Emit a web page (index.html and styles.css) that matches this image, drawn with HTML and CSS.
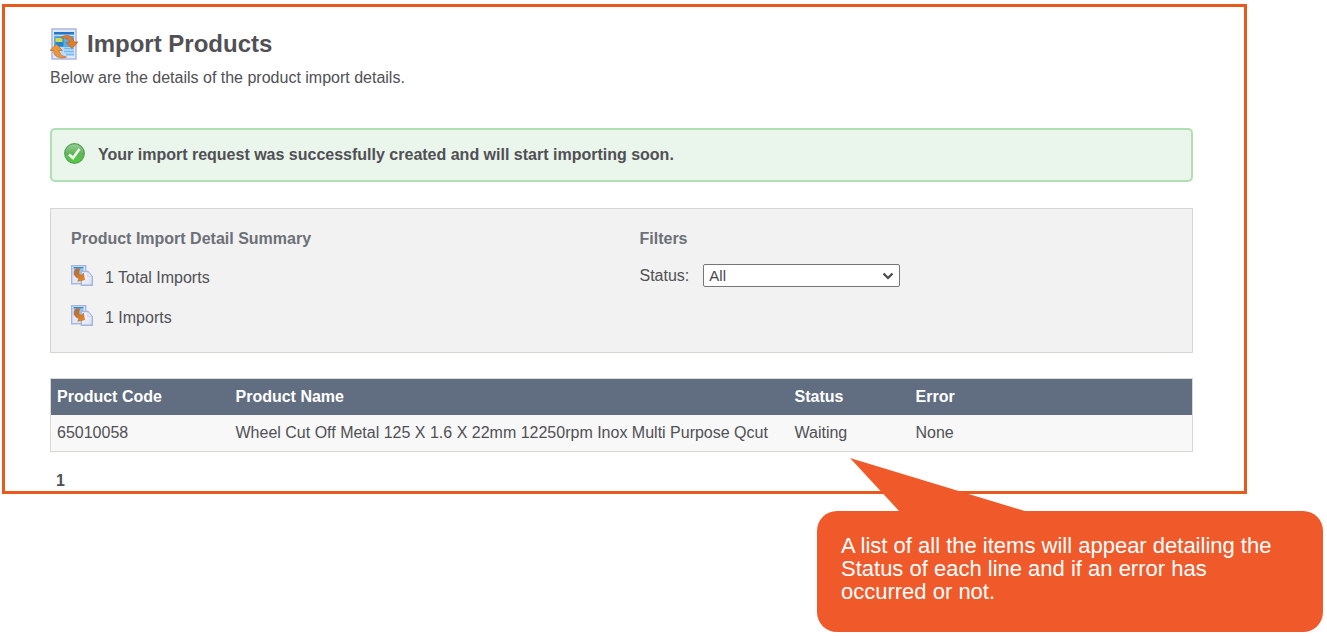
FILE: index.html
```html
<!DOCTYPE html>
<html lang="en">
<head>
    <meta charset="UTF-8">
    <meta name="viewport" content="width=device-width, initial-scale=1.0">
    <title>Import Products</title>
    <link rel="stylesheet" href="styles.css">
</head>
<body>
    <svg class="defs" width="0" height="0" aria-hidden="true">
        <defs>
            <linearGradient id="paper" x1="0" y1="0" x2="1" y2="1">
                <stop offset="0" stop-color="#ffffff"/>
                <stop offset="1" stop-color="#d3dff5"/>
            </linearGradient>
            <linearGradient id="orange" x1="0" y1="0" x2="1" y2="1">
                <stop offset="0" stop-color="#a86a35"/>
                <stop offset="1" stop-color="#f5871f"/>
            </linearGradient>
            <symbol id="icon-copy" viewBox="0 0 22 21">
                <rect x="0.7" y="0.7" width="14" height="18" fill="#e1eafa" stroke="#a9b4d8" stroke-width="1.400"/>
                <path d="M2.500 2.800h10" stroke="#2186d8" stroke-width="1.500"/>
                <path d="M2.500 4h10v6h-10z" fill="#8fc3ee"/>
                <path d="M10.300 6.500h6.500l4.500 5v8.800h-11z" fill="url(#paper)" stroke="#a9b4d8" stroke-width="1.400"/>
                <path d="M17 7l-.5 4.300 4.500.4" fill="#e4ebfa" stroke="#c5cee8" stroke-width=".7"/>
                <path d="M5.500 3.500C1.800 7 2.500 12 8 13.600L6.800 16.300l6.700-1.500L12.500 8l-2.300 2.500C7.500 9.500 7.300 6.500 9 4z" fill="url(#orange)" stroke="#b06a30" stroke-width=".6"/>
            </symbol>
        </defs>
    </svg>

    <main class="frame">
        <header class="page-title">
            <svg class="title-icon" viewBox="0 0 28 32" aria-hidden="true">
                <rect x="2" y="1" width="24" height="30" fill="#dce7fa" stroke="#aeb7dc" stroke-width="1.500"/>
                <path d="M4 4h20v24H4z" fill="#b9dcf8"/>
                <path d="M4 4h20v2.500H4z" fill="#2376cc"/>
                <path d="M4 8h20v11H4z" fill="#58aeea"/>
                <path d="M5.500 9.500h8v9h-8z" fill="#2184ce"/>
                <path d="M5.500 10h7v4h-7z" fill="#d3d94f"/>
                <path d="M14 20.500h10M14 23.500h10M16 26.500h8" stroke="#75bbee" stroke-width="1.500"/>
                <path d="M11 10C13 6.500 22.500 5.500 24 14h4l-6 6.500L16 14.500h3.500C19 11 16 9.500 11 10z" fill="#e07c2e" stroke="#b5642c" stroke-width=".7"/>
                <path d="M16.500 29C10 31.500 3.500 28.500 3.500 22.500H0L6.500 16l5.800 6.500H9c0 3.500 3.500 6 7.500 6.500z" fill="#f0943a" stroke="#b5692c" stroke-width=".7"/>
            </svg>
            <h1>Import Products</h1>
        </header>
        <p class="intro">Below are the details of the product import details.</p>

        <div class="message" role="status">
            <svg class="message-icon" viewBox="0 0 21 21" aria-hidden="true">
                <defs>
                    <linearGradient id="green" x1="0" y1="0" x2="0" y2="1">
                        <stop offset="0" stop-color="#9ccf98"/>
                        <stop offset="0.5" stop-color="#5fb55a"/>
                        <stop offset="1" stop-color="#4fd03a"/>
                    </linearGradient>
                </defs>
                <circle cx="10.500" cy="10.500" r="9.800" fill="url(#green)" stroke="#55a05a" stroke-width="1.200"/>
                <path d="M5 11.500l4 3.500 6.500-9" fill="none" stroke="#eefaec" stroke-width="2.600"/>
            </svg>
            <strong>Your import request was successfully created and will start importing soon.</strong>
        </div>

        <div class="panel">
            <section class="summary">
                <h2>Product Import Detail Summary</h2>
                <ul>
                    <li><svg class="copy-icon" aria-hidden="true"><use href="#icon-copy"/></svg><span>1 Total Imports</span></li>
                    <li><svg class="copy-icon" aria-hidden="true"><use href="#icon-copy"/></svg><span>1 Imports</span></li>
                </ul>
            </section>
            <section class="filters">
                <h2>Filters</h2>
                <div class="field">
                    <label for="status">Status:</label>
                    <div class="select-wrap">
                        <select id="status">
                            <option>All</option>
                        </select>
                        <svg class="chevron" viewBox="0 0 12 8" aria-hidden="true"><path d="M1.500 1.500L6 6l4.500-4.500" fill="none" stroke="#48484c" stroke-width="2.200"/></svg>
                    </div>
                </div>
            </section>
        </div>

        <table class="imports">
            <thead>
                <tr>
                    <th class="col-code">Product Code</th>
                    <th class="col-name">Product Name</th>
                    <th class="col-status">Status</th>
                    <th>Error</th>
                </tr>
            </thead>
            <tbody>
                <tr>
                    <td>65010058</td>
                    <td>Wheel Cut Off Metal 125 X 1.6 X 22mm 12250rpm Inox Multi Purpose Qcut</td>
                    <td>Waiting</td>
                    <td>None</td>
                </tr>
            </tbody>
        </table>
        <div class="pager">1</div>
    </main>

    <aside class="callout">
        A list of all the items will appear detailing the Status of each line and if an error has occurred or not.
    </aside>
</body>
</html>
```
FILE: styles.css
```css
* {
    box-sizing: border-box;
}

body {
    margin: 0;
    padding: 4px 4px 3px 2px;
    font-family: "Liberation Sans", Arial, sans-serif;
    font-size: 16px;
    line-height: 20px;
    color: #505055;
    background-color: #fff;
}

h1, h2, p, ul {
    margin: 0;
    padding: 0;
}

.defs {
    display: block;
}

.frame {
    margin-right: 76px;
    padding: 19px 51px 0 45px;
    border: 3px solid #e8591c;
}

.page-title {
    display: flex;
    align-items: center;
    gap: 9px;
}

.title-icon {
    width: 28px;
    height: 32px;
}

h1 {
    font-size: 24px;
    line-height: 36px;
}

.intro {
    margin-top: 6px;
}

.message {
    display: flex;
    align-items: center;
    gap: 13px;
    height: 54px;
    margin-top: 40px;
    padding: 0 12px;
    background-color: #eaf5eb;
    border: 2px solid #b0dfb4;
    border-radius: 5px;
}

.message-icon {
    width: 21px;
    height: 21px;
    margin-bottom: 4px;
}

.panel {
    display: grid;
    grid-template-columns: 1fr 1fr;
    margin-top: 26px;
    padding: 20px 20px 24px;
    background-color: #f2f2f2;
    border: 1px solid #d6d5cf;
}

h2 {
    font-size: 16px;
    line-height: 20px;
    color: #6c7077;
}

ul {
    display: grid;
    gap: 20px;
    margin-top: 19px;
    list-style: none;
}

li {
    display: flex;
    align-items: center;
    gap: 12px;
    height: 20px;
}

.copy-icon {
    width: 22px;
    height: 21px;
    margin-bottom: 6px;
}

.filters {
    padding-left: 18px;
}

.field {
    display: flex;
    align-items: center;
    gap: 14px;
    margin-top: 15px;
}

.select-wrap {
    position: relative;
    width: 197px;
}

select {
    display: block;
    width: 100%;
    height: 23px;
    padding: 0 24px 0 5px;
    appearance: none;
    font-family: inherit;
    font-size: 15px;
    color: #48484c;
    background-color: #fff;
    border: 1px solid #76767a;
    border-radius: 2px;
}

/* arrow drawn over the select */
.chevron {
    position: absolute;
    top: 8px;
    right: 6px;
    width: 12px;
    height: 8px;
    pointer-events: none;
}

.imports {
    width: 100%;
    margin-top: 25px;
    border: 1px solid #d9d9d2;
    border-collapse: collapse;
    table-layout: fixed;
}

th, td {
    height: 37px;
    padding: 0 6px;
    text-align: left;
    white-space: nowrap;
}

th {
    height: 36px;
    color: #fff;
    background-color: #616d80;
}

td {
    background-color: #f8f8f8;
}

.col-code {
    width: 179px;
}

.col-name {
    width: 559px;
}

.col-status {
    width: 121px;
}

.pager {
    padding: 19px 6px 0;
    font-weight: bold;
}

.callout {
    position: relative;
    width: 506px;
    min-height: 121px;
    margin: 17px 0 0 auto;
    padding: 23px 40px 23px 24px;
    font-size: 22px;
    line-height: 23px;
    color: #fff;
    background-color: #f05a2b;
    border-radius: 20px;
}

/* pointer towards the status column */
.callout::before {
    content: "";
    position: absolute;
    top: -53px;
    left: 33px;
    width: 178px;
    height: 54px;
    background-color: #f05a2b;
    clip-path: polygon(0 0, 50px 100%, 100% 100%);
}
```
